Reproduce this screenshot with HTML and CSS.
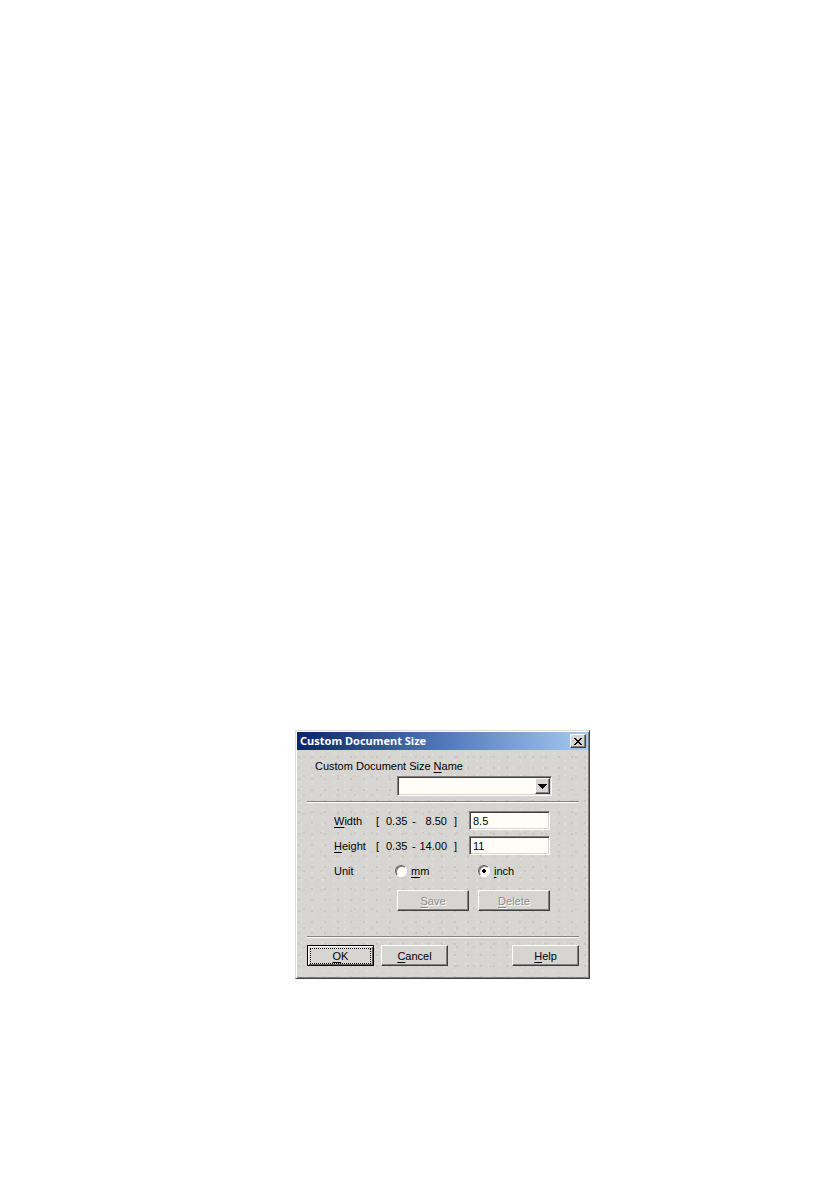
FILE: index.html
```html
<!DOCTYPE html>
<html lang="en">
<head>
<meta charset="UTF-8">
<meta name="viewport" content="width=device-width, initial-scale=1.0">
<title>Custom Document Size</title>
<link rel="stylesheet" href="styles.css">
</head>
<body>
<main class="page">
  <form class="dialog" onsubmit="return false">
    <div class="titlebar">
      <h1>Custom Document Size</h1>
      <button type="button" class="close" aria-label="Close">
        <svg width="8" height="7" viewBox="0 0 8 7" shape-rendering="crispEdges"><path d="M0 0h2v1h1v1h2v-1h1v-1h2v1h-1v1h-1v1h-1v1h1v1h1v1h1v1h-2v-1h-1v-1h-2v1h-1v1h-2v-1h1v-1h1v-1h1v-1h-1v-1h-1v-1h-1z" fill="#000"/></svg>
      </button>
    </div>

    <div class="content">
      <div class="name">
        <label for="sizeName">Custom Document Size <u>N</u>ame</label>
        <div class="combo">
          <select id="sizeName"><option></option></select>
          <span class="arrow"><svg width="9" height="5" viewBox="0 0 9 5" shape-rendering="crispEdges"><path d="M0 0h9v1h-1v1h-1v1h-1v1h-1v1h-1v-1h-1v-1h-1v-1h-1v-1h-1z" fill="#000"/></svg></span>
        </div>
      </div>

      <div class="settings">
        <div class="row">
          <label for="width"><u>W</u>idth</label>
          <span class="range"><span>[</span><span>0.35</span><span>-</span><span class="max">8.50</span><span>]</span></span>
          <input type="text" id="width" value="8.5">
        </div>
        <div class="row">
          <label for="height"><u>H</u>eight</label>
          <span class="range"><span>[</span><span>0.35</span><span>-</span><span class="max">14.00</span><span>]</span></span>
          <input type="text" id="height" value="11">
        </div>
        <div class="unit" role="radiogroup" aria-labelledby="unit">
          <span id="unit">Unit</span>
          <label><input type="radio" name="unit" value="mm"><span><u>m</u>m</span></label>
          <label><input type="radio" name="unit" value="inch" checked><span><u>i</u>nch</span></label>
        </div>
        <div class="actions">
          <button type="button" class="btn" disabled><u>S</u>ave</button>
          <button type="button" class="btn" disabled><u>D</u>elete</button>
        </div>
      </div>

      <div class="buttons">
        <button type="submit" class="btn default"><span><u>O</u>K</span></button>
        <button type="button" class="btn"><u>C</u>ancel</button>
        <button type="button" class="btn help"><u>H</u>elp</button>
      </div>
    </div>
  </form>
</main>
</body>
</html>
```

FILE: styles.css
```css
* {
  box-sizing: border-box;
}
body {
  margin: 0;
  background-color: #fff;
  color: #000;
  font-family: "Liberation Sans", Arial, sans-serif;
  font-size: 11px;
  line-height: 14px;
}
.page {
  display: flex;
  padding: 730px 20px 20px 295px;
}
.dialog {
  flex: 1;
  max-width: 295px;
  padding: 1px;
  background-color: #d6d5d1;
  /* faint speckle over the panel */
  background-image:
    radial-gradient(circle at 3px 4px, #c8c7c3 1px, transparent 1px),
    radial-gradient(circle at 8px 7px, #cbcac6 1px, transparent 1px),
    radial-gradient(circle at 5px 2px, #dddcd8 1px, transparent 1px);
  background-size: 13px 11px, 17px 19px, 11px 7px;
  border: 1px solid;
  border-color: #dedcd8 #404040 #404040 #dedcd8;
  box-shadow: inset 1px 1px #fff, inset -1px -1px #808080;
}
u {
  text-decoration: underline;
  text-underline-offset: 2px;
  text-decoration-skip-ink: none;
}
button,
input,
select {
  font: inherit;
  color: inherit;
}

/* Title bar */
.titlebar {
  display: flex;
  align-items: center;
  justify-content: space-between;
  height: 18px;
  padding: 0 2px 0 3px;
  background: linear-gradient(to right, #0a246a, #5078b8 50%, #a6caf0);
}
.titlebar h1 {
  margin: 0;
  color: #fff;
  font-family: "Noto Sans", "Open Sans", sans-serif;
  font-size: 11px;
  font-weight: bold;
}
.close {
  display: flex;
  align-items: center;
  justify-content: center;
  width: 16px;
  height: 14px;
  padding: 0;
  background-color: #d6d5d1;
  border: 1px solid;
  border-color: #fff #404040 #404040 #fff;
  box-shadow: inset -1px -1px #808080;
}

.content {
  padding: 9px 9px 11px 10px;
}

/* Name drop-down */
.name {
  display: flex;
  flex-direction: column;
  padding: 0 27px 5px 8px;
  border-bottom: 1px solid #808080;
  box-shadow: 0 1px #fff;
}
.combo {
  position: relative;
  width: 155px;
  height: 20px;
  margin: 3px 0 0 auto;
}
.combo select {
  display: block;
  width: 100%;
  height: 100%;
  padding: 0 18px 0 3px;
  appearance: none;
  background-color: #fffdf5;
  border: 1px solid;
  border-color: #808080 #fff #fff #808080;
  border-radius: 0;
  box-shadow: inset 1px 1px #404040, inset -1px -1px #d6d5d1;
}
.arrow {
  position: absolute;
  top: 2px;
  right: 2px;
  bottom: 2px;
  display: flex;
  align-items: center;
  justify-content: center;
  width: 15px;
  background-color: #d6d5d1;
  border: 1px solid;
  border-color: #fff #404040 #404040 #fff;
  box-shadow: inset -1px -1px #808080;
  pointer-events: none;
}

/* Size and unit */
.settings {
  display: flex;
  flex-direction: column;
  gap: 6px;
  padding: 9px 29px 25px 27px;
  border-bottom: 1px solid #808080;
  box-shadow: 0 1px #fff;
}
.row {
  display: grid;
  grid-template-columns: 42px 1fr 81px;
  align-items: center;
}
.range {
  display: grid;
  grid-template-columns: 10px 26px 6px 29px 10px;
}
.range .max {
  text-align: right;
}
.range span:last-child {
  text-align: right;
}
.row input {
  width: 100%;
  height: 19px;
  padding: 0 3px;
  background-color: #fffdf5;
  border: 1px solid;
  border-color: #808080 #fff #fff #808080;
  box-shadow: inset 1px 1px #404040, inset -1px -1px #d6d5d1;
}
.unit {
  display: grid;
  grid-template-columns: 61px 83px 1fr;
  align-items: center;
  height: 20px;
}
.unit label {
  display: flex;
  align-items: center;
  gap: 4px;
}
.unit input {
  width: 12px;
  height: 12px;
  margin: 0;
  appearance: none;
  background-color: #fffdf5;
  border: 1px solid;
  border-color: #606060 #fff #fff #606060;
  border-radius: 50%;
  box-shadow: inset 1px 1px #808080;
}
.unit input:checked {
  background-image: radial-gradient(circle, #000 2px, transparent 2px);
}
.actions {
  display: flex;
  justify-content: flex-end;
  gap: 9px;
  padding-top: 3px;
}

/* Push buttons */
.btn {
  width: 67px;
  height: 21px;
  padding: 0;
  background-color: #d6d5d1;
  border: 1px solid;
  border-color: #fff #404040 #404040 #fff;
  box-shadow: inset -1px -1px #808080;
}
.actions .btn {
  width: 72px;
}
.btn:disabled {
  color: #8c8b87;
  text-shadow: 1px 1px #fff;
}
.btn.default {
  padding: 2px;
  border-color: #000;
  box-shadow: inset 1px 1px #fff, inset -1px -1px #606060;
}
.btn.default span {
  display: block;
  border: 1px dotted #000;
}
.buttons {
  display: flex;
  gap: 7px;
  padding-top: 8px;
}
.help {
  margin-left: auto;
}
```
